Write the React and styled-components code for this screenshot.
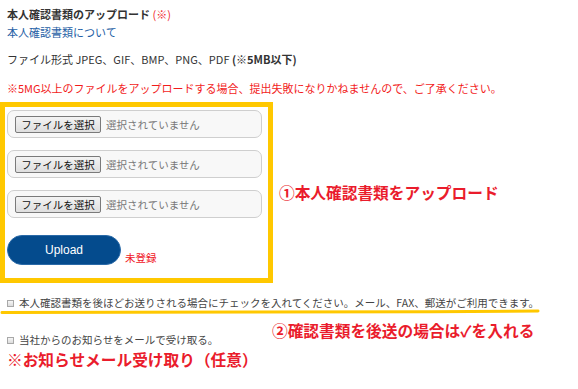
import React from "react";
import styled, { createGlobalStyle } from "styled-components";

const Global = createGlobalStyle`
  html, body { margin: 0; padding: 0; background: #fff; }
  body {
    font-family: "Noto Sans CJK JP", "Noto Sans", sans-serif;
    color: #333;
    font-size: 11px;
  }
`;

const Page = styled.div`
  width: 578px;
  height: 389px;
  overflow: hidden;
`;

const Line = styled.div`
  padding-left: 7px;
  line-height: 18px;
  height: 18px;
  margin-top: ${(p) => p.$mt || 0}px;
  color: ${(p) => p.$color || "#333"};
  font-weight: ${(p) => (p.$bold ? 700 : 400)};
  white-space: nowrap;
`;

const Red = styled.span`
  color: #f0282d;
  font-weight: 400;
`;

const Strong = styled.b`
  font-weight: 700;
`;

const UploadArea = styled.div`
  display: flex;
  align-items: flex-start;
  margin-top: 5px;
`;

const HighlightBox = styled.div`
  width: 273px;
  box-sizing: border-box;
  border: 5px solid #ffc800;
  padding: 3px 6px 13px 2px;
  display: flex;
  flex-direction: column;
  gap: 12px;
`;

const FileRow = styled.div`
  height: 28px;
  box-sizing: border-box;
  border: 1px solid #cfcfcf;
  border-radius: 7px;
  background: #f8f8f8;
  display: flex;
  align-items: center;
  padding-left: 7px;
  gap: 5px;
`;

const FileButton = styled.span`
  height: 17px;
  box-sizing: border-box;
  width: 86px;
  border: 1px solid #7a7a7a;
  border-radius: 2px;
  background: linear-gradient(#f4f4f4, #dedede);
  color: #111;
  font-size: 10.5px;
  line-height: 15px;
  text-align: center;
  white-space: nowrap;
`;

const FileStatus = styled.span`
  color: #777;
  font-size: 10.5px;
  white-space: nowrap;
`;

const SubmitRow = styled.div`
  display: flex;
  align-items: flex-end;
  gap: 4px;
  margin-top: 5px;
`;

const UploadButton = styled.button`
  width: 114px;
  height: 30px;
  border: 1px solid #2a6aa8;
  border-radius: 15px;
  background: #044b8d;
  color: #fff;
  font-family: "Liberation Sans", Arial, sans-serif;
  font-size: 12px;
  padding: 0;
`;

const Unregistered = styled.span`
  color: #f0141e;
  font-size: 10.5px;
  line-height: 14px;
`;

const Annotation = styled.div`
  color: #ea1c2c;
  font-weight: 700;
  font-size: 15.7px;
  line-height: 20px;
  white-space: nowrap;
  margin-top: ${(p) => p.$mt || 0}px;
  margin-left: ${(p) => p.$ml || 0}px;
`;

const CheckLine = styled.div`
  position: relative;
  display: flex;
  align-items: center;
  gap: 5px;
  padding-left: 7px;
  height: 18px;
  line-height: 18px;
  font-size: 10.5px;
  margin-top: ${(p) => p.$mt || 0}px;
  white-space: nowrap;
  color: #444;
`;

const Box = styled.span`
  width: 7px;
  height: 7px;
  border: 1px solid #a8a8a8;
  background: linear-gradient(#f6f6f6, #dcdcdc);
  flex: none;
  box-sizing: border-box;
`;

const Underline = styled.svg`
  position: absolute;
  left: 0;
  top: 14px;
  pointer-events: none;
`;

const LowerGrid = styled.div`
  display: grid;
  grid-template-columns: 272px 1fr;
  align-items: start;
`;

const files = [0, 1, 2];

export default function App() {
  return (
    <Page>
      <Global />
      <Line $mt={5} $bold>
        本人確認書類のアップロード <Red>(※)</Red>
      </Line>
      <Line $color="#1f5fa6">本人確認書類について</Line>
      <Line $mt={9}>
        ファイル形式 JPEG、GIF、BMP、PNG、PDF <Strong>(※5MB以下)</Strong>
      </Line>
      <Line $mt={11} $color="#f21c1c">
        ※5MG以上のファイルをアップロードする場合、提出失敗になりかねませんので、ご了承ください。
      </Line>

      <UploadArea>
        <HighlightBox>
          {files.map((i) => (
            <FileRow key={i}>
              <FileButton>ファイルを選択</FileButton>
              <FileStatus>選択されていません</FileStatus>
            </FileRow>
          ))}
          <SubmitRow>
            <UploadButton>Upload</UploadButton>
            <Unregistered>未登録</Unregistered>
          </SubmitRow>
        </HighlightBox>
        <Annotation $mt={81} $ml={6}>
          ①本人確認書類をアップロード
        </Annotation>
      </UploadArea>

      <CheckLine $mt={11}>
        <Box />
        本人確認書類を後ほどお送りされる場合にチェックを入れてください。メール、FAX、郵送がご利用できます。
        <Underline width="545" height="8" viewBox="0 0 545 8">
          <path
            d="M2 4.5 C 150 5, 350 4.5, 538 3"
            stroke="#ffc800"
            strokeWidth="3"
            fill="none"
            strokeLinecap="round"
          />
        </Underline>
      </CheckLine>

      <LowerGrid>
        <CheckLine $mt={19}>
          <Box />
          当社からのお知らせをメールで受け取る。
        </CheckLine>
        <Annotation $mt={9}>②確認書類を後送の場合は✓を入れる</Annotation>
      </LowerGrid>
      <Annotation $mt={1} $ml={7}>
        ※お知らせメール受け取り（任意）
      </Annotation>
    </Page>
  );
}
